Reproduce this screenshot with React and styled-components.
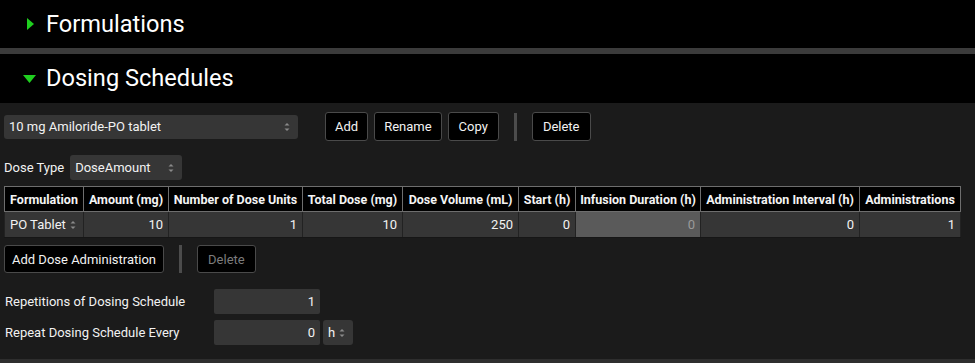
import React from "react";
import styled, { createGlobalStyle } from "styled-components";

const GlobalStyle = createGlobalStyle`
  html, body {
    margin: 0;
    padding: 0;
    background: #1b1b1b;
  }
  body {
    font-family: Roboto, "Liberation Sans", sans-serif;
    color: #f2f2f2;
  }
`;

const Page = styled.div`
  width: 975px;
  height: 363px;
  overflow: hidden;
  display: flex;
  flex-direction: column;
  background: #1b1b1b;
`;

const SectionHeader = styled.div`
  height: ${({ height }) => height || "48px"};
  background: #000;
  display: flex;
  align-items: center;
  flex-shrink: 0;
`;

const HeaderTitle = styled.div`
  font-size: 23.6px;
  color: #fff;
  margin-left: ${({ offset }) => offset || "12px"};
  padding-bottom: 1px;
`;

const Divider = styled.div`
  height: 6px;
  background: #3b3b3b;
  flex-shrink: 0;
`;

const Caret = styled.svg`
  flex-shrink: 0;
  margin-left: ${({ left }) => left};
`;

const Content = styled.div`
  flex: 1;
  padding: 9px 4px 0 4px;
  display: flex;
  flex-direction: column;
  border-bottom: 4px solid #2e2e2e;
`;

const Row = styled.div`
  display: flex;
  align-items: center;
  margin-top: ${({ top }) => top || "0"};
`;

const SelectBox = styled.div`
  width: ${({ width }) => width};
  height: ${({ height }) => height || "24px"};
  background: #363636;
  border-radius: 3px;
  box-sizing: border-box;
  padding: 0 8px 0 5px;
  display: flex;
  align-items: center;
  justify-content: space-between;
  font-size: 13px;
  color: #f2f2f2;
  margin-left: ${({ left }) => left || "0"};
`;

const Button = styled.button`
  height: ${({ tall }) => tall || "29px"};
  background: #000;
  border: 1px solid #4a4a4a;
  border-radius: 3px;
  color: ${({ disabled }) => (disabled ? "#7c7c7c" : "#f2f2f2")};
  font-family: Roboto, "Liberation Sans", sans-serif;
  font-size: 13px;
  padding: 0 ${({ pad }) => pad || "9px"};
  margin-left: ${({ left }) => left || "6px"};
  cursor: pointer;
`;

const Separator = styled.div`
  width: 3px;
  height: 28px;
  background: #4c4c4c;
  margin-left: ${({ left }) => left || "16px"};
`;

const Label = styled.span`
  font-size: 13px;
  color: #f2f2f2;
  width: ${({ width }) => width || "auto"};
  padding-left: ${({ pad }) => pad || "0"};
`;

const Table = styled.table`
  border-collapse: collapse;
  margin-top: 6px;
  table-layout: fixed;
  width: 956px;
`;

const Th = styled.th`
  height: 24px;
  background: #000;
  border: 1px solid #6e6e6e;
  font-size: 12.5px;
  font-weight: 700;
  color: #f4f4f4;
  padding: 0 3px;
  white-space: nowrap;
  text-align: center;
`;

const Td = styled.td`
  height: 25px;
  background: ${({ disabled }) => (disabled ? "#5a5a5a" : "#363636")};
  border: 1px solid #222;
  border-bottom-color: #161616;
  font-size: 13px;
  color: ${({ disabled }) => (disabled ? "#9a9a9a" : "#f2f2f2")};
  padding: 0 5px;
  text-align: ${({ align }) => align || "right"};
`;

const CellSelect = styled.div`
  display: flex;
  align-items: center;
  justify-content: space-between;
  padding-right: 2px;
`;

const NumberInput = styled.div`
  width: 106px;
  height: 25px;
  box-sizing: border-box;
  background: #363636;
  border-radius: 2px;
  font-size: 13px;
  color: #f2f2f2;
  display: flex;
  align-items: center;
  justify-content: flex-end;
  padding-right: 5px;
`;

const Spinner = () => (
  <svg width="6" height="10" viewBox="0 0 6 10">
    <path d="M0.5 3.5 L3 1 L5.5 3.5 Z" fill="#8a8a8a" />
    <path d="M0.5 6.5 L3 9 L5.5 6.5 Z" fill="#8a8a8a" />
  </svg>
);

const columns = [
  ["Formulation", 79],
  ["Amount (mg)", 85],
  ["Number of Dose Units", 134],
  ["Total Dose (mg)", 100],
  ["Dose Volume (mL)", 116],
  ["Start (h)", 57],
  ["Infusion Duration (h)", 125],
  ["Administration Interval (h)", 159],
  ["Administrations", 101],
];

const values = ["10", "1", "10", "250", "0", "0", "0", "1"];

export default function App() {
  return (
    <Page>
      <GlobalStyle />
      <SectionHeader height="48px">
        <Caret left="27px" width="7" height="12" viewBox="0 0 7 12">
          <path d="M0 0 L7 6 L0 12 Z" fill="#1fcf1f" />
        </Caret>
        <HeaderTitle offset="12px">Formulations</HeaderTitle>
      </SectionHeader>
      <Divider />
      <SectionHeader height="49px">
        <Caret left="23px" width="13" height="8" viewBox="0 0 13 8">
          <path d="M0 0 L13 0 L6.5 8 Z" fill="#1fcf1f" />
        </Caret>
        <HeaderTitle offset="10px">Dosing Schedules</HeaderTitle>
      </SectionHeader>
      <Content>
        <Row>
          <SelectBox width="294px">
            <span>10 mg Amiloride-PO tablet</span>
            <Spinner />
          </SelectBox>
          <Button left="27px" pad="9px">Add</Button>
          <Button pad="9px">Rename</Button>
          <Button pad="10px">Copy</Button>
          <Separator left="15px" />
          <Button left="15px" pad="10px">Delete</Button>
        </Row>
        <Row top="14px">
          <Label>Dose Type</Label>
          <SelectBox width="112px" height="25px" left="6px">
            <span>DoseAmount</span>
            <Spinner />
          </SelectBox>
        </Row>
        <Table>
          <colgroup>
            {columns.map(([name, w]) => (
              <col key={name} style={{ width: w }} />
            ))}
          </colgroup>
          <thead>
            <tr>
              {columns.map(([name]) => (
                <Th key={name}>{name}</Th>
              ))}
            </tr>
          </thead>
          <tbody>
            <tr>
              <Td align="left">
                <CellSelect>
                  <span>PO Tablet</span>
                  <Spinner />
                </CellSelect>
              </Td>
              {values.map((v, i) => (
                <Td key={i} disabled={i === 5}>
                  {v}
                </Td>
              ))}
            </tr>
          </tbody>
        </Table>
        <Row top="7px">
          <Button left="0" pad="7px" tall="28px">
            Add Dose Administration
          </Button>
          <Separator left="15px" />
          <Button left="15px" pad="10px" tall="28px" disabled>
            Delete
          </Button>
        </Row>
        <Row top="16px">
          <Label width="209px" pad="1px">Repetitions of Dosing Schedule</Label>
          <NumberInput>1</NumberInput>
        </Row>
        <Row top="6px">
          <Label width="209px" pad="1px">Repeat Dosing Schedule Every</Label>
          <NumberInput>0</NumberInput>
          <SelectBox width="30px" height="25px" left="3px">
            <span>h</span>
            <Spinner />
          </SelectBox>
        </Row>
      </Content>
    </Page>
  );
}
